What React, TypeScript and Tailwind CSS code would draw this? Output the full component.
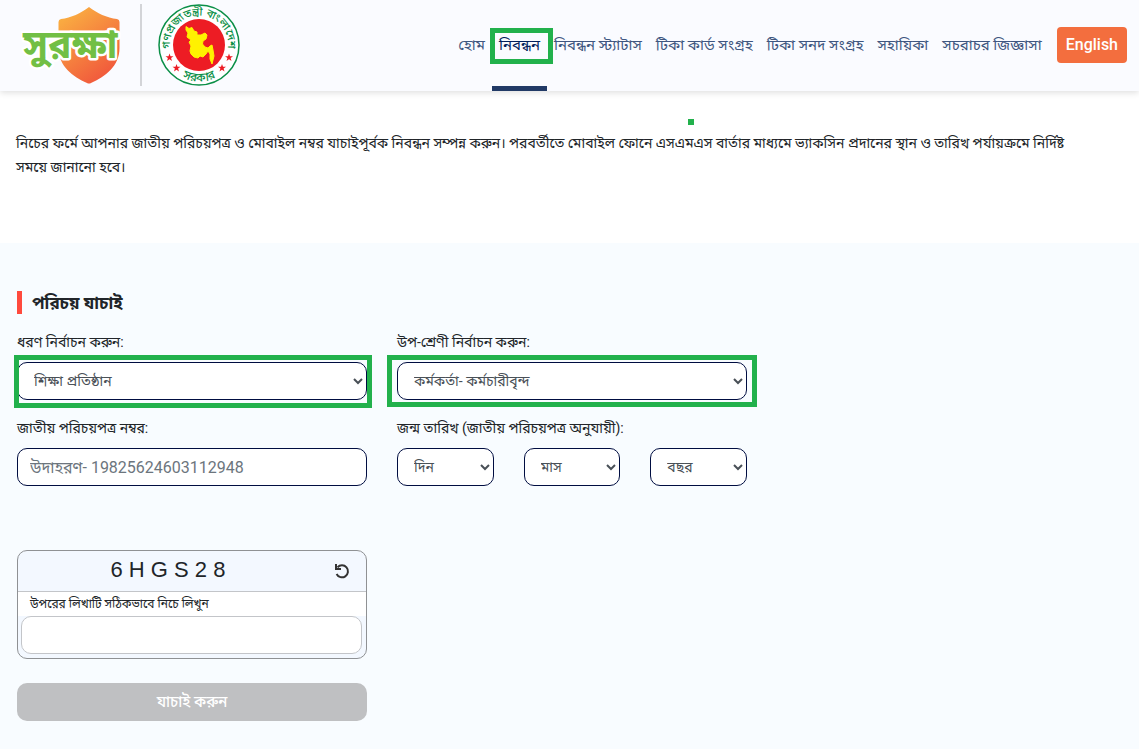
import type { ReactNode } from 'react';

const navBefore = ['হোম'];
const navAfter = ['নিবন্ধন স্ট্যাটাস', 'টিকা কার্ড সংগ্রহ', 'টিকা সনদ সংগ্রহ', 'সহায়িকা', 'সচরাচর জিজ্ঞাসা'];

const selectClass =
  'h-[38px] w-full rounded-[10px] border border-[#000d41] bg-white px-3 text-sm text-[#495057]';

function ShieldLogo() {
  return (
    <svg viewBox="0 0 100 80" className="h-20 w-[100px]" role="img" aria-label="সুরক্ষা">
      <defs>
        <linearGradient id="shield" x1="0" y1="0" x2="0.6" y2="1">
          <stop offset="0" stopColor="#fbb942" />
          <stop offset="1" stopColor="#f15a3c" />
        </linearGradient>
      </defs>
      <path
        d="M68 2C76 8 86 13 96 14Q98.500 14.500 98.500 17V43C98.500 61 84 72 70 78Q68 79 66 78C52 72 37.500 61 37.500 43V17Q37.500 14.500 40 14C50 13 60 8 68 2Z"
        fill="url(#shield)"
      />
      <text
        x="2"
        y="53"
        fontSize="39"
        fontWeight="700"
        fill="#72bf44"
        stroke="#fff"
        strokeWidth="5"
        strokeLinejoin="round"
        paintOrder="stroke"
      >
        সুরক্ষা
      </text>
    </svg>
  );
}

const star = 'M0-4L1-1.200H4L1.600.600L2.500 3.500L0 1.800L-2.500 3.500L-1.600.600L-4-1.200H-1Z';

function Emblem() {
  return (
    <svg viewBox="0 0 82 82" className="h-[82px] w-[82px]" role="img" aria-label="গণপ্রজাতন্ত্রী বাংলাদেশ সরকার">
      <defs>
        <path id="arcTop" d="M12.500 46A29 29 0 1 1 69.500 46" />
        <path id="arcBottom" d="M16 67A35 35 0 0 0 66 67" />
      </defs>
      <circle cx="41" cy="41" r="40" fill="#fff" stroke="#0b8f47" strokeWidth="1.500" />
      <circle cx="41" cy="41" r="26" fill="#ed1c24" />
      <path
        fill="#fff200"
        stroke="#fff200"
        strokeWidth="1"
        strokeLinejoin="round"
        d="M28 22.500L31 24.500L34 23.500L36 27L39 28L39 31L43 31L47 29L49 31L48 35L45 37L44.500 40L47 43L50 44L52 42L54 41L55 46L56 52L54 60L52 55L52 50L50 47L48 50L45 53L42 52L40 54L36 53L33 50L32 47L33 42L31 38L33 36L29 33L30 29L28 26Z"
      />
      <g fill="#ed1c24">
        <path d={star} transform="translate(11.500 53.500)" />
        <path d={star} transform="translate(18.500 64)" />
        <path d={star} transform="translate(71 53.500)" />
        <path d={star} transform="translate(64 64)" />
      </g>
      <g fill="#0b8f47" fontWeight="500" textAnchor="middle">
        <text fontSize="11">
          <textPath href="#arcTop" startOffset="50%">গণপ্রজাতন্ত্রী বাংলাদেশ</textPath>
        </text>
        <text fontSize="12">
          <textPath href="#arcBottom" startOffset="50%">সরকার</textPath>
        </text>
      </g>
    </svg>
  );
}

function ReloadIcon() {
  return (
    <svg viewBox="0 0 16 16" className="h-4 w-4" fill="none" stroke="#333" strokeWidth="2" aria-hidden="true">
      <path d="M3.500 4.300A6 6 0 1 1 2.600 11" />
      <path d="M1 1V7H7V5H3V1Z" fill="#333" stroke="none" />
    </svg>
  );
}

function Field({ id, label, children }: { id: string; label: string; children: ReactNode }) {
  return (
    <div>
      <label htmlFor={id} className="mb-2 block text-sm leading-6">
        {label}
      </label>
      {children}
    </div>
  );
}

export default function App() {
  return (
    <div className="flex min-h-screen flex-col bg-white font-['Roboto','Noto_Sans_Bengali',sans-serif] text-base leading-6 text-[#212529]">
      <header className="flex h-[91px] items-center justify-between bg-[#fafbff] pr-3 pl-[21px] shadow-[0_2px_6px_rgba(0,0,0,0.12)]">
        <a href="#home" className="flex items-center pb-0.5">
          <ShieldLogo />
          <span className="mr-4 ml-[19px] h-[82px] w-0.5 bg-[#d3d4d8]" />
          <Emblem />
        </a>
        <nav className="flex h-full items-center pb-0.5 text-[15px] whitespace-nowrap text-[#3e5680]">
          {navBefore.map((t) => (
            <a key={t} href="#nav" className="px-[7px]">
              {t}
            </a>
          ))}
          <a
            href="#register"
            aria-current="page"
            className="relative flex h-full items-center px-[7px] text-[#00205b]"
          >
            নিবন্ধন
            <span className="absolute inset-x-0 -bottom-0.5 h-[5px] bg-[#213a66]" />
            <span className="absolute top-7 -right-1.5 -left-0.5 h-9 border-[5px] border-[#22b14c]" />
          </a>
          {navAfter.map((t) => (
            <a key={t} href="#nav" className="px-[7px]">
              {t}
            </a>
          ))}
          <button type="button" className="ml-2 h-9 rounded bg-[#f36e3e] px-[9px] text-base font-medium text-white">
            English
          </button>
        </nav>
      </header>

      <main className="flex flex-1 flex-col">
        <section className="relative pt-10 pr-12 pb-16 pl-4">
          <span className="absolute top-7 left-[688px] h-1.5 w-1.5 bg-[#22b14c]" />
          <p className="text-sm leading-6">
            নিচের ফর্মে আপনার জাতীয় পরিচয়পত্র ও মোবাইল নম্বর যাচাইপূর্বক নিবন্ধন সম্পন্ন করুন। পরবর্তীতে মোবাইল ফোনে
            এসএমএস বার্তার মাধ্যমে ভ্যাকসিন প্রদানের স্থান ও তারিখ পর্যায়ক্রমে নির্দিষ্ট সময়ে জানানো হবে।
          </p>
        </section>

        <section className="flex-1 bg-[#f8fcff] pt-12 pr-3 pb-7 pl-[17px]">
          <h1 className="mb-4 flex h-[23px] items-center border-l-[5px] border-[#ff4a3d] pl-2.5 text-[17px] leading-6 font-bold">
            পরিচয় যাচাই
          </h1>
          <form onSubmit={(e) => e.preventDefault()}>
            <div className="grid grid-cols-3 gap-x-[30px] gap-y-4">
              <Field id="kind" label="ধরণ নির্বাচন করুন:">
                <div className="relative">
                  <select id="kind" className={selectClass}>
                    <option>শিক্ষা প্রতিষ্ঠান</option>
                  </select>
                  <span className="pointer-events-none absolute -top-[7px] -right-[5px] -bottom-2 -left-[3px] border-[5px] border-[#22b14c]" />
                </div>
              </Field>
              <Field id="subkind" label="উপ-শ্রেণী নির্বাচন করুন:">
                <div className="relative">
                  <select id="subkind" className={selectClass}>
                    <option>কর্মকর্তা- কর্মচারীবৃন্দ</option>
                  </select>
                  <span className="pointer-events-none absolute -inset-x-2.5 -inset-y-[7px] border-[5px] border-[#22b14c]" />
                </div>
              </Field>
              <div className="col-start-1">
                <Field id="nid" label="জাতীয় পরিচয়পত্র নম্বর:">
                  <input
                    id="nid"
                    placeholder="উদাহরণ- 19825624603112948"
                    className="h-[38px] w-full rounded-[10px] border border-[#000d41] bg-white px-3 text-base placeholder:text-[#6c757d]"
                  />
                </Field>
              </div>
              <Field id="day" label="জন্ম তারিখ (জাতীয় পরিচয়পত্র অনুযায়ী):">
                <div className="grid grid-cols-3 gap-[30px]">
                  <select id="day" className={selectClass}>
                    <option>দিন</option>
                  </select>
                  <select aria-label="মাস" className={selectClass}>
                    <option>মাস</option>
                  </select>
                  <select aria-label="বছর" className={selectClass}>
                    <option>বছর</option>
                  </select>
                </div>
              </Field>
              <div className="col-start-1 mt-12">
                <div className="overflow-hidden rounded-[10px] border border-[#8f9194] bg-[#f3f8ff]">
                  <div className="flex h-[41px] items-center border-b border-[#c3c5c9] pr-4">
                    <span className="flex-1 pr-4 pb-0.5 text-center font-['Liberation_Sans',sans-serif] text-[22px]">
                      6 H G S 2 8
                    </span>
                    <button type="button" aria-label="রিলোড">
                      <ReloadIcon />
                    </button>
                  </div>
                  <label htmlFor="captcha" className="block bg-white px-3 text-xs leading-6">
                    উপরের লিখাটি সঠিকভাবে নিচে লিখুন
                  </label>
                  <div className="pr-1 pb-1 pl-[3px]">
                    <input id="captcha" className="block h-[38px] w-full rounded-[10px] border border-[#c3c5c9] bg-white px-3" />
                  </div>
                </div>
                <button type="submit" className="mt-6 h-[38px] w-full rounded-[10px] bg-[#bfc0c2] text-[15px] font-medium text-white">
                  যাচাই করুন
                </button>
              </div>
            </div>
          </form>
        </section>
      </main>
    </div>
  );
}
